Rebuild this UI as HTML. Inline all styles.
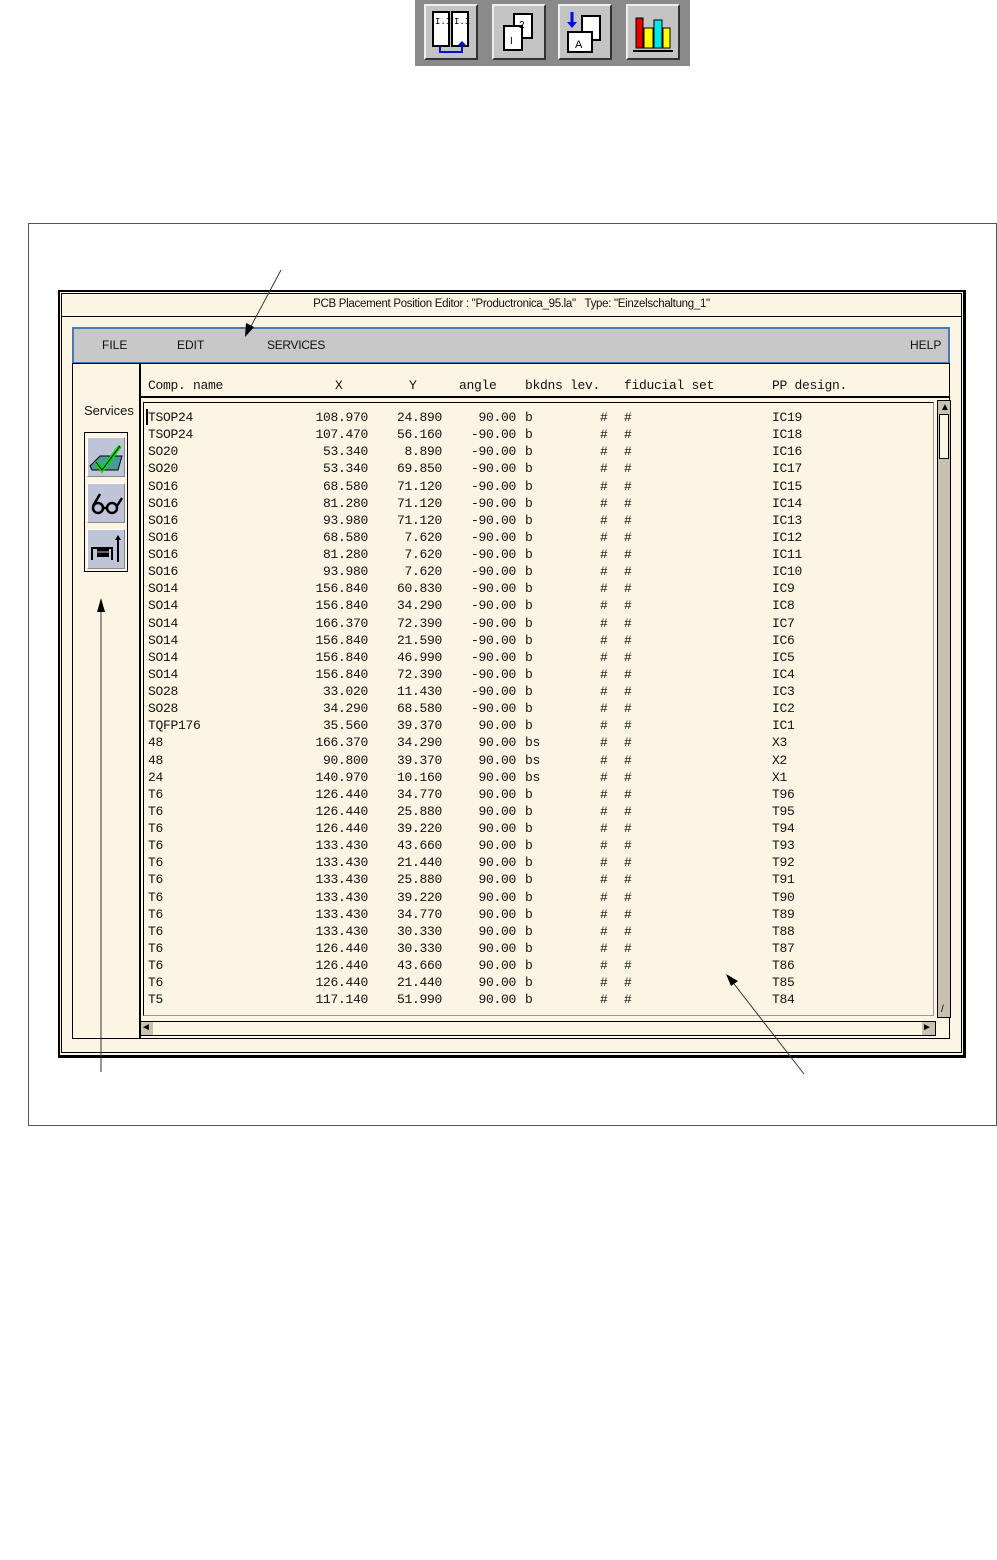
<!DOCTYPE html>
<html><head><meta charset="utf-8"><style>
body{margin:0;width:997px;height:1560px;background:#fff;position:relative;overflow:hidden;font-family:"Liberation Sans",sans-serif}
div{position:absolute;box-sizing:border-box}
.btn{background:#c4c4c4;border:2px solid;border-color:#eee #333 #333 #eee;width:54px;height:56px;top:4px}
.m{font-family:"Liberation Mono",monospace;font-size:13px;color:#111;white-space:pre;letter-spacing:-0.3px}
.r{text-align:right}
.ui{font-size:12px;color:#111}
</style></head><body>
<!-- toolbar -->
<div style="left:415px;top:0;width:275px;height:66px;background:#8a8a8a"></div>
<div class="btn" style="left:424px">
<svg width="50" height="52"><rect x="7" y="6" width="16" height="34" fill="#fff" stroke="#000" stroke-width="2"/><rect x="26" y="6" width="16" height="34" fill="#fff" stroke="#000" stroke-width="2"/><text x="9" y="18" font-size="9" font-family="Liberation Mono">I.I</text><text x="28" y="18" font-size="9" font-family="Liberation Mono">I.I</text><path d="M14 40V46H36V40" fill="none" stroke="#0010d0" stroke-width="2"/><path d="M31 40h10l-5-5z" fill="#0010d0"/></svg></div>
<div class="btn" style="left:492px">
<svg width="50" height="52"><rect x="20" y="8" width="18" height="24" fill="#fff" stroke="#000" stroke-width="2"/><rect x="10" y="20" width="18" height="24" fill="#fff" stroke="#000" stroke-width="2"/><text x="16" y="38" font-size="10">I</text><text x="25" y="22" font-size="10">2</text></svg></div>
<div class="btn" style="left:558px">
<svg width="50" height="52"><rect x="22" y="10" width="18" height="24" fill="#fff" stroke="#000" stroke-width="2"/><rect x="8" y="26" width="24" height="20" fill="#fff" stroke="#000" stroke-width="2"/><text x="15" y="42" font-size="11">A</text><path d="M12 6v12" stroke="#0010d0" stroke-width="3"/><path d="M7 16h10l-5 6z" fill="#0010d0"/></svg></div>
<div class="btn" style="left:626px">
<svg width="50" height="52"><rect x="8" y="12" width="7" height="30" fill="#e00000" stroke="#000"/><rect x="16" y="22" width="9" height="20" fill="#ffff00" stroke="#000"/><rect x="26" y="14" width="8" height="28" fill="#00e8e8" stroke="#000"/><rect x="35" y="22" width="7" height="20" fill="#ffff00" stroke="#000"/><path d="M5 45h40" stroke="#000" stroke-width="2"/></svg></div>

<!-- outer frame -->
<div style="left:28px;top:223px;width:969px;height:903px;border:1px solid #555"></div>
<!-- window -->
<div style="left:58px;top:290px;width:908px;height:768px;border:2px solid #000;border-right-width:3px;border-bottom-width:3px;background:#fdf5e4"></div>
<div style="left:61px;top:293px;width:901px;height:24px;border:1px solid #000"></div>
<div class="ui" style="left:61px;top:298px;width:901px;text-align:center;font-size:11.5px;letter-spacing:-0.3px">PCB Placement Position Editor : "Productronica_95.la"&nbsp;&nbsp;&nbsp;Type: "Einzelschaltung_1"</div>
<div style="left:61px;top:316px;width:901px;height:737px;border:1px solid #000;border-top:none"></div>
<!-- menu -->
<div style="left:72px;top:327px;width:878px;height:37px;background:#c8c8c8;border:2px solid #4a7ab0"></div>
<div class="ui" style="left:102px;top:338px">FILE</div>
<div class="ui" style="left:177px;top:338px">EDIT</div>
<div class="ui" style="left:267px;top:338px;letter-spacing:-0.3px">SERVICES</div>
<div class="ui" style="left:910px;top:338px">HELP</div>
<!-- panel -->
<div style="left:72px;top:363px;width:878px;height:676px;border:1px solid #000"></div>
<div style="left:139px;top:363px;width:2px;height:676px;background:#000"></div>
<div style="left:140px;top:396px;width:810px;height:2px;background:#000"></div>
<div class="ui" style="left:84px;top:403px;font-size:13px">Services</div>
<!-- left icons -->
<div style="left:84px;top:432px;width:44px;height:140px;border:1px solid #000;background:#fdf5e4"></div>
<div style="left:87px;top:437px;width:38px;height:40px;background:#c0c4d8;border:1px solid;border-color:#fff #888 #888 #fff">
<svg width="36" height="38"><path d="M2 28L12 18H34L30 32H4Z" fill="#4a9a98" stroke="#000"/><path d="M8 24L14 32L32 8" fill="none" stroke="#00e000" stroke-width="4"/><path d="M8 24L14 32L32 8" fill="none" stroke="#000" stroke-width="1"/></svg></div>
<div style="left:87px;top:483px;width:38px;height:40px;background:#c0c4d8;border:1px solid;border-color:#fff #888 #888 #fff">
<svg width="36" height="38"><circle cx="10" cy="24" r="5" fill="none" stroke="#000" stroke-width="2.5"/><circle cx="24" cy="24" r="5" fill="none" stroke="#000" stroke-width="2.5"/><path d="M15 24h4M5 22L12 10M29 22L34 14" stroke="#000" stroke-width="2.5" fill="none"/></svg></div>
<div style="left:87px;top:529px;width:38px;height:40px;background:#c0c4d8;border:1px solid;border-color:#fff #888 #888 #fff">
<svg width="36" height="38"><path d="M4 30V18H24V30" fill="none" stroke="#000" stroke-width="2"/><rect x="9" y="17" width="12" height="10" fill="#000"/><path d="M9 22h12" stroke="#c0c4d8"/><path d="M30 32V8" stroke="#000" stroke-width="2"/><path d="M27 10h6l-3-5z"/></svg></div>
<!-- header -->
<div class="m" style="left:148px;top:378px">Comp. name</div>
<div class="m" style="left:335px;top:378px">X</div>
<div class="m" style="left:409px;top:378px">Y</div>
<div class="m" style="left:459px;top:378px">angle</div>
<div class="m" style="left:525px;top:378px">bkdns lev.</div>
<div class="m" style="left:624px;top:378px">fiducial set</div>
<div class="m" style="left:772px;top:378px">PP design.</div>
<!-- list box -->
<div style="left:143px;top:402px;width:791px;height:614px;border:1px solid #999;border-left-color:#000;border-top-color:#000"></div>
<div style="left:937px;top:400px;width:14px;height:618px;background:#c8c0b0;border:1px solid #000"></div>
<div style="left:939px;top:414px;width:10px;height:45px;background:#fdf5e4;border:1px solid #000"></div>
<div style="left:940px;top:402px;font-size:10px">▲</div>
<div style="left:941px;top:1004px;font-size:10px">/</div>
<div style="left:140px;top:1021px;width:796px;height:15px;border:1px solid #000"></div>
<div style="left:141px;top:1022px;width:12px;height:13px;background:#c8c0b0;font-size:10px">◄</div>
<div style="left:922px;top:1022px;width:13px;height:13px;background:#c8c0b0;font-size:10px">►</div>
<div style="left:146px;top:409px;width:2px;height:16px;background:#000"></div>
<!-- rows -->
<div class="m" style="left:148px;top:409px;line-height:17.12px">TSOP24
TSOP24
SO20
SO20
SO16
SO16
SO16
SO16
SO16
SO16
SO14
SO14
SO14
SO14
SO14
SO14
SO28
SO28
TQFP176
48
48
24
T6
T6
T6
T6
T6
T6
T6
T6
T6
T6
T6
T6
T5</div>
<div class="m r" style="left:290px;width:78px;top:409px;line-height:17.12px">108.970
107.470
53.340
53.340
68.580
81.280
93.980
68.580
81.280
93.980
156.840
156.840
166.370
156.840
156.840
156.840
33.020
34.290
35.560
166.370
90.800
140.970
126.440
126.440
126.440
133.430
133.430
133.430
133.430
133.430
133.430
126.440
126.440
126.440
117.140</div>
<div class="m r" style="left:370px;width:72px;top:409px;line-height:17.12px">24.890
56.160
8.890
69.850
71.120
71.120
71.120
7.620
7.620
7.620
60.830
34.290
72.390
21.590
46.990
72.390
11.430
68.580
39.370
34.290
39.370
10.160
34.770
25.880
39.220
43.660
21.440
25.880
39.220
34.770
30.330
30.330
43.660
21.440
51.990</div>
<div class="m r" style="left:446px;width:70px;top:409px;line-height:17.12px">90.00
-90.00
-90.00
-90.00
-90.00
-90.00
-90.00
-90.00
-90.00
-90.00
-90.00
-90.00
-90.00
-90.00
-90.00
-90.00
-90.00
-90.00
90.00
90.00
90.00
90.00
90.00
90.00
90.00
90.00
90.00
90.00
90.00
90.00
90.00
90.00
90.00
90.00
90.00</div>
<div class="m" style="left:525px;top:409px;line-height:17.12px">b
b
b
b
b
b
b
b
b
b
b
b
b
b
b
b
b
b
b
bs
bs
bs
b
b
b
b
b
b
b
b
b
b
b
b
b</div>
<div class="m" style="left:600px;top:409px;line-height:17.12px">#
#
#
#
#
#
#
#
#
#
#
#
#
#
#
#
#
#
#
#
#
#
#
#
#
#
#
#
#
#
#
#
#
#
#</div>
<div class="m" style="left:624px;top:409px;line-height:17.12px">#
#
#
#
#
#
#
#
#
#
#
#
#
#
#
#
#
#
#
#
#
#
#
#
#
#
#
#
#
#
#
#
#
#
#</div>
<div class="m" style="left:772px;top:409px;line-height:17.12px">IC19
IC18
IC16
IC17
IC15
IC14
IC13
IC12
IC11
IC10
IC9
IC8
IC7
IC6
IC5
IC4
IC3
IC2
IC1
X3
X2
X1
T96
T95
T94
T93
T92
T91
T90
T89
T88
T87
T86
T85
T84</div>
<!-- callout arrows -->
<svg style="position:absolute;left:0;top:0" width="997" height="1560">
<path d="M281 270L249 330M101 1072V608M804 1074L731 980" stroke="#333" stroke-width="1" fill="none"/>
<path d="M245 337L246 323L254 327Z M101 598L97 612H105Z M726 974L738 981L731 986Z" fill="#000"/>
</svg>
</body></html>
